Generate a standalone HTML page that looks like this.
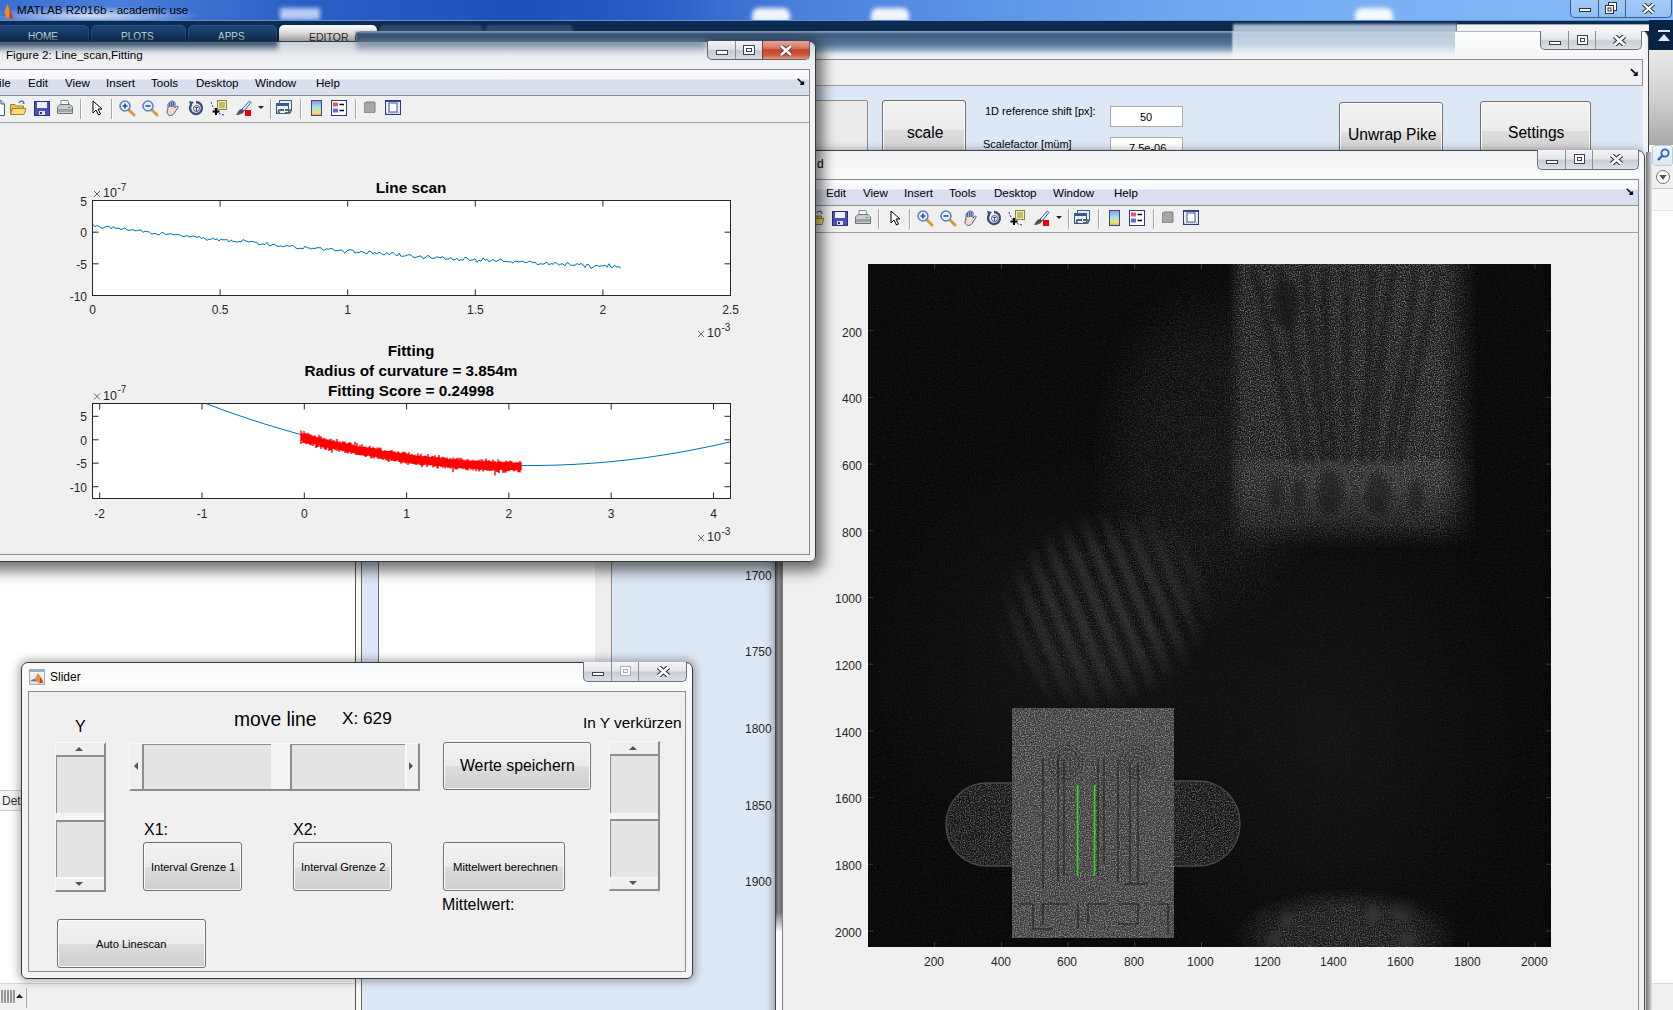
<!DOCTYPE html>
<html><head><meta charset="utf-8">
<style>
*{box-sizing:border-box;margin:0;padding:0}
html,body{width:1673px;height:1010px;overflow:hidden;background:#f0f0f0;font-family:"Liberation Sans",sans-serif;color:#000}
.a{position:absolute}
.t{position:absolute;white-space:nowrap;line-height:1}
/* window frame */
.win{position:absolute;border:1px solid #3c3c3c;border-radius:7px 7px 0 0;background:linear-gradient(#e9eef3,#f6f8fa 40px,#eef2f6);box-shadow:0 0 12px 3px rgba(0,0,0,.45)}
.wbtns{position:absolute;top:-1px;height:19px;border:1px solid #6a6f78;border-top:none;border-radius:0 0 5px 5px;overflow:hidden;display:flex;background:linear-gradient(#f4f5f7,#e3e6ea 45%,#c9ced6 55%,#dde1e6)}
.wbtns div{position:relative;border-left:1px solid #8a8f98;height:100%}
.wbtns div:first-child{border-left:none}
.menubar{position:absolute;border:1px solid #8d8d8d;background:linear-gradient(#fbfbfd 0,#f7f8fb 9px,#d8deee 10px,#dbe0ef 100%)}
.mi{position:absolute;font-size:11.6px;top:8px;line-height:1;white-space:nowrap}
.toolbar{position:absolute;background:#f0f0f0;border-bottom:1px solid #a0a0a0}
.sep{position:absolute;top:5px;width:2px;height:18px;border-left:1px solid #a8a8a8;border-right:1px solid #fff}
.btn{position:absolute;border:1px solid #707070;border-radius:3px;background:linear-gradient(#f2f2f2 0,#ebebeb 50%,#dddddd 50%,#cfcfcf 100%);box-shadow:inset 0 0 0 1px #fcfcfc;text-align:center;white-space:nowrap}
.tick{font-size:12px;color:#262626}
</style></head><body>
<!-- MATLAB main title bar -->
<div class="a" style="left:0;top:0;width:1673px;height:20px;background:linear-gradient(90deg,#3a6fd2 0,#4a7ed8 120px,#2b5fc6 300px,#1f4fb8 520px,#2a5cc4 650px,#4a80dc 800px,#5e96e8 1000px,#74acf2 1250px,#80b6f6 1500px,#86baf7 1673px)"></div>
<div class="a" style="left:0;top:0;width:420px;height:20px;background:radial-gradient(ellipse 110px 10px at 90px 16px,rgba(255,255,255,.75),rgba(255,255,255,0))"></div>
<div class="a" style="left:752px;top:8px;width:38px;height:14px;border-radius:7px 7px 0 0;background:rgba(255,255,255,.92);filter:blur(2px)"></div>
<div class="a" style="left:871px;top:8px;width:38px;height:14px;border-radius:7px 7px 0 0;background:rgba(255,255,255,.92);filter:blur(2px)"></div>
<div class="a" style="left:1355px;top:8px;width:38px;height:14px;border-radius:7px 7px 0 0;background:rgba(255,255,255,.92);filter:blur(2px)"></div>
<div class="a" style="left:280px;top:8px;width:40px;height:12px;background:rgba(220,230,255,.8);filter:blur(2px)"></div>
<svg class="a" style="left:-1px;top:2px" width="15" height="18" viewBox="1 1 14 12" preserveAspectRatio="none"><path d="M1 10 L6 7.5 L7.5 10.5 Z" fill="#3a78c0"/><path d="M6 7.5 L9 2 L11 6.5 L10.5 12.5 L7.5 10.5Z" fill="#f08a24"/><path d="M9 2 L12 7 L14.5 11.5 L10.5 12.5 L11 6.5Z" fill="#c8401c"/></svg>
<div class="t" style="left:17px;top:4px;font-size:11.6px;color:#000">MATLAB R2016b - academic use</div>
<!-- main window buttons -->
<div class="a" style="left:1570px;top:0;width:102px;height:18px;border:1px solid #3a5a8a;border-top:none;border-radius:0 0 5px 5px;background:linear-gradient(rgba(255,255,255,.25),rgba(255,255,255,.1))"></div>
<div class="a" style="left:1598px;top:0;width:1px;height:17px;background:#3a5a8a"></div>
<div class="a" style="left:1625px;top:0;width:1px;height:17px;background:#3a5a8a"></div>
<div class="a" style="left:1579px;top:8px;width:12px;height:4px;border:1px solid #333;background:#fff"></div>
<svg class="a" style="left:1604px;top:2px" width="14" height="13"><rect x="4.5" y="0.5" width="8" height="8" fill="#fff" stroke="#333"/><rect x="1.5" y="3.5" width="8" height="8" fill="#fff" stroke="#333"/><rect x="4" y="6" width="3" height="3" fill="none" stroke="#333"/></svg>
<svg class="a" style="left:1642px;top:3px" width="13" height="11"><path d="M1.5 1 L11.5 10 M11.5 1 L1.5 10" stroke="#333" stroke-width="4.2"/><path d="M1.5 1 L11.5 10 M11.5 1 L1.5 10" stroke="#fff" stroke-width="2.2"/></svg>
<!-- tab strip -->
<div class="a" style="left:0;top:20px;width:1673px;height:25px;background:linear-gradient(#0c2c52,#082445)"></div>
<div class="a" style="left:0;top:20px;width:1673px;height:1px;background:#5f8fd0"></div>
<div class="a" style="left:-4px;top:25px;width:93px;height:20px;border-radius:5px 5px 0 0;background:linear-gradient(#1c4677,#12365f);border:1px solid #2a5487"></div>
<div class="a" style="left:91px;top:25px;width:95px;height:20px;border-radius:5px 5px 0 0;background:linear-gradient(#1c4677,#12365f);border:1px solid #2a5487"></div>
<div class="a" style="left:188px;top:25px;width:89px;height:20px;border-radius:5px 5px 0 0;background:linear-gradient(#1c4677,#12365f);border:1px solid #2a5487"></div>
<div class="a" style="left:279px;top:25px;width:98px;height:20px;border-radius:5px 5px 0 0;background:linear-gradient(#fafafa,#d6d6d6)"></div>
<div class="a" style="left:379px;top:25px;width:104px;height:20px;border-radius:5px 5px 0 0;background:#2e4c6e;filter:blur(1px)"></div>
<div class="a" style="left:485px;top:25px;width:88px;height:20px;border-radius:5px 5px 0 0;background:#2e4c6e;filter:blur(1px)"></div>
<div class="t" style="left:28px;top:32px;font-size:10px;color:#dfe8f2">HOME</div>
<div class="t" style="left:121px;top:32px;font-size:10px;color:#dfe8f2">PLOTS</div>
<div class="t" style="left:218px;top:32px;font-size:10px;color:#dfe8f2">APPS</div>
<div class="t" style="left:309px;top:32px;font-size:10.5px;color:#333">EDITOR</div>
<!-- GUI window (behind) -->
<div class="a" style="left:355px;top:31px;width:1294px;height:990px;border:1px solid #444;border-top-color:#a8b8c8;border-radius:7px 7px 0 0;background:linear-gradient(#e6ebf1,#f4f6f9 30px,#eef1f5)"></div>
<div class="a" style="left:356px;top:32px;width:877px;height:26px;background:linear-gradient(#3a5a80 0,#4a6a90 8px,#5a7aa0 13px,#a4b8ce 19px,#e6ebf0 22px,#f4f6f8 26px);filter:blur(1px)"></div>
<div class="a" style="left:1233px;top:24px;width:224px;height:8px;background:linear-gradient(#9ab0c8,#b8c8da);filter:blur(.8px)"></div>
<div class="a" style="left:1233px;top:32px;width:224px;height:26px;background:linear-gradient(#b6c8dc 0,#c6d4e4 12px,#dde5ee 18px,#f4f6f8 24px);filter:blur(1px)"></div>
<div class="a" style="left:1455px;top:32px;width:190px;height:26px;background:linear-gradient(#fdfdfd,#f4f6f8)"></div>
<div class="a" style="left:1457px;top:24px;width:192px;height:7px;background:#f4f4f4;border-top:1px solid #9aa"></div>
<div class="wbtns" style="left:1540px;top:31px;width:102px;height:19px">
 <div style="width:28px"><div class="a" style="left:8px;top:10px;width:12px;height:4px;border:1px solid #3c4150;background:#fff"></div></div>
 <div style="width:27px"><div class="a" style="left:8px;top:4px;width:11px;height:10px;border:1px solid #3c4150;background:#fff"><div class="a" style="left:2px;top:2px;width:5px;height:4px;border:1px solid #3c4150"></div></div></div>
 <div style="width:47px"><svg class="a" style="left:17px;top:4px" width="13" height="11"><path d="M1.5 1 L11.5 10 M11.5 1 L1.5 10" stroke="#3c4150" stroke-width="5"/><path d="M1.5 1 L11.5 10 M11.5 1 L1.5 10" stroke="#fff" stroke-width="2.6"/></svg></div>
</div>
<div class="a" style="left:363px;top:59px;width:1280px;height:27px;background:#f0f0f0;border:1px solid #8d8d8d;border-bottom:1px solid #a0a0a0"></div>
<div class="t" style="left:1629px;top:66px;font-size:12px;font-weight:bold">&#x2198;</div>
<div class="a" style="left:362px;top:86px;width:1281px;height:930px;background:#dde8f6"></div>
<!-- partially hidden button -->
<div class="a" style="left:780px;top:100px;width:88px;height:60px;background:#ebebeb;border:1px solid #8e8e8e;border-radius:2px"></div>
<div class="btn" style="left:882px;top:100px;width:84px;height:60px"><span class="t" style="left:24px;top:24px;font-size:15.6px">scale</span></div>
<div class="t" style="left:985px;top:106px;font-size:11px">1D reference shift [px]:</div>
<div class="a" style="left:1110px;top:106px;width:73px;height:21px;background:#fff;border:1px solid #a9a9a9"><span class="t" style="left:29px;top:5px;font-size:11px">50</span></div>
<div class="t" style="left:983px;top:139px;font-size:11px">Scalefactor [müm]</div>
<div class="a" style="left:1110px;top:137px;width:73px;height:21px;background:#fff;border:1px solid #a9a9a9"><span class="t" style="left:18px;top:5px;font-size:11px">7.5e-06</span></div>
<div class="btn" style="left:1339px;top:102px;width:104px;height:60px"><span class="t" style="left:8px;top:24px;font-size:15.6px">Unwrap Pike</span></div>
<div class="btn" style="left:1480px;top:101px;width:111px;height:60px"><span class="t" style="left:27px;top:23px;font-size:15.6px">Settings</span></div>
<!-- lower part of GUI: white panel, gray strip -->
<div class="a" style="left:362px;top:86px;width:16px;height:930px;background:#dde8f6"></div>
<div class="a" style="left:361px;top:540px;width:1px;height:480px;background:#6a6a6a"></div>
<div class="a" style="left:378px;top:540px;width:1px;height:300px;background:#6a6a6a"></div>
<div class="a" style="left:379px;top:540px;width:216px;height:300px;background:#fff"></div>
<div class="a" style="left:595px;top:540px;width:16px;height:300px;background:#eeeeee"></div>
<div class="a" style="left:611px;top:540px;width:1px;height:300px;background:#8a8f96"></div>
<div class="a" style="left:355px;top:540px;width:1px;height:480px;background:#555"></div>
<div class="a" style="left:356px;top:540px;width:5px;height:480px;background:#fafafa"></div>
<div class="t" style="left:745px;top:570px;font-size:12px;color:#262626">1700</div>
<div class="t" style="left:745px;top:646px;font-size:12px;color:#262626">1750</div>
<div class="t" style="left:745px;top:723px;font-size:12px;color:#262626">1800</div>
<div class="t" style="left:745px;top:800px;font-size:12px;color:#262626">1850</div>
<div class="t" style="left:745px;top:876px;font-size:12px;color:#262626">1900</div>
<!-- right strip -->
<div class="a" style="left:1649px;top:20px;width:24px;height:990px;background:#fff"></div>
<div class="a" style="left:1649px;top:45px;width:24px;height:5px;background:#082445"></div>
<div class="a" style="left:1649px;top:20px;width:24px;height:30px;background:#082445"></div>
<div class="a" style="left:1658px;top:30px;width:12px;height:2px;background:#dfe8f2"></div>
<svg class="a" style="left:1658px;top:34px" width="12" height="7"><path d="M0 7 L6 0 L12 7Z" fill="#dfe8f2"/></svg>
<div class="a" style="left:1649px;top:50px;width:24px;height:95px;background:linear-gradient(#eaeaea,#d0d0d0 50%,#a9a9a9)"></div>
<div class="a" style="left:1652px;top:145px;width:21px;height:21px;background:linear-gradient(#f3f6fa,#dde6f0);border:1px solid #c3ccd8;border-radius:3px"></div>
<svg class="a" style="left:1656px;top:148px" width="14" height="14"><circle cx="9" cy="5" r="3.6" fill="none" stroke="#2a64c0" stroke-width="1.8"/><path d="M6.5 7.5 L2 12" stroke="#2a64c0" stroke-width="2.4"/></svg>
<div class="a" style="left:1649px;top:166px;width:24px;height:22px;background:#f0f0f0"></div>
<svg class="a" style="left:1655px;top:169px" width="16" height="16"><circle cx="8" cy="8" r="6.5" fill="#fff" stroke="#777"/><path d="M4.5 6 L11.5 6 L8 11Z" fill="#555"/></svg>
<div class="a" style="left:1649px;top:188px;width:24px;height:1px;background:#ccc"></div>
<div class="a" style="left:1649px;top:189px;width:24px;height:22px;background:#f7f7f7;border-bottom:1px solid #e5e5e5"></div>
<div class="a" style="left:1649px;top:983px;width:24px;height:27px;background:#f0f0f0;border-top:1px solid #ddd"></div>
<!-- bottom-left desktop panel -->
<div class="a" style="left:0;top:45px;width:355px;height:965px;background:#fff"></div>
<div class="a" style="left:0;top:790px;width:22px;height:21px;background:#f4f4f4;border-top:1px solid #ccc;border-bottom:1px solid #ccc"></div>
<div class="t" style="left:2px;top:795px;font-size:12px;color:#333">Det</div>
<div class="a" style="left:0;top:983px;width:355px;height:27px;background:#f0f0f0;border-top:1px solid #d6d6d6"></div>
<div class="a" style="left:1px;top:990px;width:14px;height:13px;background:repeating-linear-gradient(90deg,#999 0,#999 2px,#e8e8e8 2px,#e8e8e8 3px)"></div>
<svg class="a" style="left:16px;top:994px" width="7" height="4"><path d="M0 4 L3.5 0 L7 4Z" fill="#222"/></svg>
<div class="a" style="left:26px;top:988px;width:1px;height:20px;background:#aaa"></div>
<!-- Image figure window -->
<div class="a" style="left:775px;top:150px;width:870px;height:880px;border:1px solid #444;border-radius:7px 7px 0 0;background:linear-gradient(#f2f4f7,#fbfbfc 25px,#f1f3f6 30px);box-shadow:-2px 0 8px rgba(0,0,0,.35)"></div>
<div class="t" style="left:817px;top:158px;font-size:12px">d</div>
<div class="wbtns" style="left:1537px;top:150px;width:102px;height:20px">
 <div style="width:28px"><div class="a" style="left:8px;top:10px;width:12px;height:4px;border:1px solid #3c4150;background:#fff"></div></div>
 <div style="width:27px"><div class="a" style="left:8px;top:4px;width:11px;height:10px;border:1px solid #3c4150;background:#fff"><div class="a" style="left:2px;top:2px;width:5px;height:4px;border:1px solid #3c4150"></div></div></div>
 <div style="width:47px"><svg class="a" style="left:17px;top:4px" width="13" height="11"><path d="M1.5 1 L11.5 10 M11.5 1 L1.5 10" stroke="#3c4150" stroke-width="5"/><path d="M1.5 1 L11.5 10 M11.5 1 L1.5 10" stroke="#fff" stroke-width="2.6"/></svg></div>
</div>
<div class="menubar" style="left:783px;top:179px;width:856px;height:27px"></div>
<div class="t" style="left:1625px;top:186px;font-size:11px;font-weight:bold">&#x2198;</div>
<div class="mi" style="left:826px;top:187px">Edit</div>
<div class="mi" style="left:863px;top:187px">View</div>
<div class="mi" style="left:904px;top:187px">Insert</div>
<div class="mi" style="left:949px;top:187px">Tools</div>
<div class="mi" style="left:994px;top:187px">Desktop</div>
<div class="mi" style="left:1053px;top:187px">Window</div>
<div class="mi" style="left:1114px;top:187px">Help</div>
<div class="a" style="left:783px;top:206px;width:856px;height:27px;background:#f0f0f0;border-bottom:1px solid #a0a0a0;border-right:1px solid #8d8d8d;border-left:1px solid #8d8d8d"></div>
<div id="tb2" class="a" style="left:798px;top:206px;width:420px;height:27px"><svg class="a" style="left:0;top:0;overflow:visible" width="420" height="27"><g transform="translate(-10,4)"><path d="M2.5 0.5 H11 L14.5 4 V15.5 H2.5Z" fill="#fff" stroke="#3d5a8a"/><path d="M11 0.5 V4 H14.5" fill="#dde6f5" stroke="#3d5a8a"/></g><g transform="translate(10,4)"><path d="M0.5 4.5 H5 L6.5 6 H13.5 V14.5 H0.5Z" fill="#e8c35a" stroke="#a4802a"/><path d="M2.5 8.5 H16 L14 14.5 H0.5Z" fill="#f7dd7e" stroke="#a4802a"/><path d="M9 3 C10 0.5 13 0.5 14 3" fill="none" stroke="#3d6db3" stroke-width="1.3"/><path d="M13 1.5 L15 3.5 L12.5 4Z" fill="#3d6db3"/></g><g transform="translate(34,4)"><rect x="0.5" y="1.5" width="15" height="14" fill="#4a50b8" stroke="#2c2f7a"/><rect x="3" y="2" width="10" height="6" fill="#eef0ff"/><rect x="5" y="11" width="6" height="4" fill="#dfe2f0"/><rect x="6" y="12" width="2" height="2" fill="#333"/></g><g transform="translate(57,4)"><path d="M4 0.5 H11 L12 5 H4Z" fill="#fff" stroke="#7a8a9a"/><path d="M0.5 7 L3 4.5 H13 L15.5 7 V13.5 H0.5Z" fill="#c9cdd2" stroke="#6d7378"/><rect x="1" y="9" width="14" height="3" fill="#9da3a8"/><rect x="11" y="7" width="2" height="1" fill="#3a3"/></g><rect x="80" y="3" width="1" height="20" fill="#a7a7a7"/><rect x="81" y="3" width="1" height="20" fill="#fff"/><rect x="111" y="3" width="1" height="20" fill="#a7a7a7"/><rect x="112" y="3" width="1" height="20" fill="#fff"/><rect x="270" y="3" width="1" height="20" fill="#a7a7a7"/><rect x="271" y="3" width="1" height="20" fill="#fff"/><rect x="300" y="3" width="1" height="20" fill="#a7a7a7"/><rect x="301" y="3" width="1" height="20" fill="#fff"/><rect x="355" y="3" width="1" height="20" fill="#a7a7a7"/><rect x="356" y="3" width="1" height="20" fill="#fff"/><g transform="translate(92,4)"><path d="M1 1 V13 L4 10 L6.5 15 L8.5 14 L6 9 H10Z" fill="#fff" stroke="#000" stroke-width="1"/></g><g transform="translate(119,4)"><path d="M9.5 9.5 L15 15" stroke="#d89a3c" stroke-width="3" stroke-linecap="round"/><circle cx="6" cy="6" r="5" fill="#e6f0fb" stroke="#5b7fc0" stroke-width="1.5"/><path d="M3.5 6 H8.5 M6 3.5 V8.5" stroke="#2a4fa0" stroke-width="1.6"/></g><g transform="translate(142,4)"><path d="M9.5 9.5 L15 15" stroke="#d89a3c" stroke-width="3" stroke-linecap="round"/><circle cx="6" cy="6" r="5" fill="#e6f0fb" stroke="#5b7fc0" stroke-width="1.5"/><path d="M3.5 6 H8.5" stroke="#2a4fa0" stroke-width="1.6"/></g><g transform="translate(165,4)"><path d="M3 8 V4 C3 3 4.5 3 4.5 4 V7 V2.5 C4.5 1.5 6.3 1.5 6.3 2.5 V7 V1.5 C6.3 0.5 8.2 0.5 8.2 1.5 V7 V2.5 C8.2 1.5 10 1.5 10 2.5 V8 L11.5 6.5 C12.5 5.5 14 6.5 13 7.5 L10 12 C9 14 7.5 15.5 5.5 15.5 C3.5 15.5 2 14 2 12Z" fill="#f6d9bf" stroke="#3d5fb0" stroke-width="1"/></g><g transform="translate(188,4)"><path d="M3.5 4 A6 6 0 1 0 8 2" fill="none" stroke="#3b4f7a" stroke-width="2.4"/><path d="M1 1 L6 2 L2.5 6Z" fill="#3b4f7a"/><circle cx="8.5" cy="8.5" r="3" fill="none" stroke="#3b4f7a" stroke-width="1"/><path d="M7 7.5 H10 M8.5 7.5 V11" stroke="#3b4f7a"/></g><g transform="translate(211,4)"><rect x="6.5" y="0.5" width="9" height="9" fill="#f2eca0" stroke="#8c8840"/><path d="M8 3 H14 M8 5 H14 M8 7 H14" stroke="#8c8840"/><path d="M0 2 C1 6 3 10 9 14 L13 15" fill="none" stroke="#3030e0" stroke-dasharray="2 1.5"/><path d="M5 8 V15 M1.5 11.5 H8.5" stroke="#000" stroke-width="2"/></g><g transform="translate(235,4)"><path d="M14.5 1 L7 9 L9 11 L16 2.5Z" fill="#dfe8f8" stroke="#3a5fbf"/><path d="M7 9 C4 9 3 12 1 15 C5 15 9 13 9 11Z" fill="#555"/><rect x="10" y="10" width="6" height="6" fill="#e00"/></g><g transform="translate(258,4)"><path d="M0 6 H6 L3 9Z" fill="#222"/></g><g transform="translate(276,4)"><rect x="3.5" y="0.5" width="12" height="10" fill="#e8eef8" stroke="#3a5a8a"/><rect x="0.5" y="3.5" width="12" height="10" fill="#e8eef8" stroke="#3a5a8a"/><rect x="1" y="4" width="11" height="2" fill="#3a5a8a"/><path d="M4 13 C2 13 2 10 4 10 H8 M9 10 H13 C15 10 15 13 13 13 H9" fill="none" stroke="#566" stroke-width="1.8"/></g><g transform="translate(311,4)"><defs><linearGradient id="cbg2" x1="0" y1="0" x2="0" y2="1"><stop offset="0" stop-color="#9a8ee8"/><stop offset=".45" stop-color="#9ce8e8"/><stop offset=".8" stop-color="#f2e070"/><stop offset="1" stop-color="#f49a60"/></linearGradient></defs><rect x="0.5" y="0.5" width="10" height="15" fill="url(#cbg2)" stroke="#3a4a8a"/></g><g transform="translate(331,4)"><rect x="0.5" y="0.5" width="15" height="15" fill="#fff" stroke="#2c3e7a"/><rect x="2" y="2.5" width="5" height="4" fill="#e85858"/><rect x="2" y="8.5" width="5" height="4" fill="#6464e8"/><path d="M8.5 4.5 H13 M8.5 10.5 H13" stroke="#000" stroke-width="1.3"/></g><g transform="translate(364,4)"><rect x="0.5" y="2.5" width="10" height="10" fill="#a6a6a6" stroke="#909090"/><path d="M1 2.5 L2 1.5 H10.5 L11.5 2.5 V12" fill="none" stroke="#b8b8b8"/></g><g transform="translate(385,4)"><rect x="0.5" y="0.5" width="15" height="14" fill="#3d5296" stroke="#2c3e7a"/><rect x="1" y="2" width="14" height="12" fill="#e8ecf4"/><rect x="4" y="3" width="8" height="9" fill="#fff" stroke="#3d5296"/><path d="M1 13 H15" stroke="#8a98c0" stroke-dasharray="1 1"/></g></svg></div>
<div class="a" style="left:782px;top:233px;width:857px;height:800px;background:#f0f0f0;border-left:1px solid #7d7d7d;border-right:1px solid #8d8d8d"></div>
<div class="a" style="left:776px;top:561px;width:6px;height:370px;background:linear-gradient(90deg,#5a5a5a,#8a8a8a 40%,#6a6a6a);-webkit-mask-image:linear-gradient(#000 95%,transparent)"></div>
<div class="a" style="left:776px;top:931px;width:6px;height:80px;background:#fcfcfc"></div>
<div class="a" style="left:1646px;top:152px;width:6px;height:858px;background:linear-gradient(90deg,#707070,#a8a8a8 50%,#e4e4e4)"></div>
<!-- image -->
<svg class="a" style="left:868px;top:264px" width="683" height="683" viewBox="0 0 683 683"><defs><filter id="spk" x="0" y="0" width="683" height="683" filterUnits="userSpaceOnUse"><feTurbulence type="fractalNoise" baseFrequency="0.8" numOctaves="2" seed="11"/><feColorMatrix type="matrix" values="0 0 0 0 1  0 0 0 0 1  0 0 0 0 1  2.6 0 0 0 -1.05"/></filter><filter id="b2" x="-30%" y="-30%" width="160%" height="160%"><feGaussianBlur stdDeviation="2"/></filter><filter id="b1" x="-30%" y="-30%" width="160%" height="160%"><feGaussianBlur stdDeviation="1"/></filter><radialGradient id="rg"><stop offset="0" stop-color="#fff" stop-opacity="1"/><stop offset=".6" stop-color="#fff" stop-opacity=".85"/><stop offset="1" stop-color="#fff" stop-opacity="0"/></radialGradient><radialGradient id="r12"><stop offset="0" stop-color="#131313"/><stop offset="1" stop-color="#131313" stop-opacity="0"/></radialGradient><linearGradient id="gBH" x1="0" y1="0" x2="1" y2="0"><stop offset="0" stop-color="#fff" stop-opacity="0"/><stop offset="0.06" stop-color="#fff" stop-opacity="0.85"/><stop offset="0.85" stop-color="#fff" stop-opacity="1"/><stop offset="1" stop-color="#fff" stop-opacity="0"/></linearGradient><linearGradient id="gBV" x1="0" y1="0" x2="0" y2="1"><stop offset="0" stop-color="#fff" stop-opacity="1"/><stop offset="0.78" stop-color="#fff" stop-opacity="1"/><stop offset="0.93" stop-color="#fff" stop-opacity="0.5"/><stop offset="1" stop-color="#fff" stop-opacity="0"/></linearGradient><mask id="mBH" maskUnits="userSpaceOnUse" x="0" y="0" width="683" height="683"><rect x="360" y="0" width="250" height="300" fill="url(#gBH)"/></mask><mask id="mBV" maskUnits="userSpaceOnUse" x="0" y="0" width="683" height="683"><rect x="300" y="-5" width="383" height="290" fill="url(#gBV)"/></mask><mask id="mChip" maskUnits="userSpaceOnUse" x="0" y="0" width="683" height="683"><rect x="144" y="444" width="162" height="230" fill="#fff"/></mask><mask id="mEll" maskUnits="userSpaceOnUse" x="0" y="0" width="683" height="683"><rect x="78" y="519" width="110" height="83" rx="41" fill="#fff"/><rect x="262" y="517" width="110" height="85" rx="42" fill="#fff"/></mask><mask id="mDiag" maskUnits="userSpaceOnUse" x="0" y="0" width="683" height="683"><ellipse cx="238" cy="345" rx="115" ry="100" fill="url(#rg)" transform="rotate(-25 238 345)"/></mask><mask id="mHalo" maskUnits="userSpaceOnUse" x="0" y="0" width="683" height="683"><ellipse cx="340" cy="190" rx="120" ry="180" fill="url(#rg)"/></mask><mask id="mBot" maskUnits="userSpaceOnUse" x="0" y="0" width="683" height="683"><ellipse cx="478" cy="672" rx="115" ry="48" fill="url(#rg)"/></mask></defs><rect width="683" height="683" fill="#070707"/><ellipse cx="210" cy="400" rx="220" ry="220" fill="url(#r12)"/><ellipse cx="460" cy="470" rx="200" ry="260" fill="url(#r12)"/><rect width="683" height="683" filter="url(#spk)" opacity=".055"/><g mask="url(#mHalo)"><rect x="200" y="0" width="300" height="400" fill="#101010"/><rect width="683" height="683" filter="url(#spk)" opacity=".16"/></g><g mask="url(#mBV)"><g mask="url(#mBH)"><rect x="340" y="0" width="320" height="290" fill="#1c1c1c"/><rect width="683" height="683" filter="url(#spk)" opacity=".4"/><g filter="url(#b2)" fill="none" stroke="#0c0c0c" stroke-width="6" opacity=".45"><path d="M385.5 5 Q411.2 100 428.0 200 M410.6 5 Q429.8 100 441.8 200 M436.9 5 Q447.2 100 456.3 200 M457.0 5 Q455.3 100 467.4 200 M478.6 5 Q478.9 100 479.2 200 M504.1 5 Q503.5 100 493.2 200 M525.3 5 Q508.2 100 504.9 200 M547.7 5 Q539.0 100 517.3 200 M570.3 5 Q549.2 100 529.7 200"/></g><g filter="url(#b2)" fill="#121212" opacity=".6"><ellipse cx="418" cy="40" rx="13" ry="24"/><ellipse cx="462" cy="228" rx="12" ry="22"/><ellipse cx="510" cy="230" rx="12" ry="20"/><ellipse cx="408" cy="230" rx="6" ry="16"/><ellipse cx="430" cy="230" rx="5" ry="15"/><ellipse cx="548" cy="232" rx="7" ry="15"/></g><rect x="360" y="195" width="260" height="68" fill="#fff" opacity=".05"/><g filter="url(#b1)" fill="none" stroke="#4a4a4a" stroke-width="2"><ellipse cx="462" cy="228" rx="19" ry="29"/><ellipse cx="512" cy="230" rx="19" ry="27"/></g></g></g><g mask="url(#mDiag)"><g filter="url(#b2)"><path d="M-188.0 240 L-91.0 470" stroke="#262626" stroke-width="10"/><path d="M-166.0 240 L-69.0 470" stroke="#262626" stroke-width="10"/><path d="M-144.0 240 L-47.0 470" stroke="#262626" stroke-width="10"/><path d="M-122.0 240 L-25.0 470" stroke="#262626" stroke-width="10"/><path d="M-100.0 240 L-3.0 470" stroke="#262626" stroke-width="10"/><path d="M-78.0 240 L19.0 470" stroke="#262626" stroke-width="10"/><path d="M-56.0 240 L41.0 470" stroke="#262626" stroke-width="10"/><path d="M-34.0 240 L63.0 470" stroke="#262626" stroke-width="10"/><path d="M-12.0 240 L85.0 470" stroke="#262626" stroke-width="10"/><path d="M10.0 240 L107.0 470" stroke="#262626" stroke-width="10"/><path d="M32.0 240 L129.0 470" stroke="#262626" stroke-width="10"/><path d="M54.0 240 L151.0 470" stroke="#262626" stroke-width="10"/><path d="M76.0 240 L173.0 470" stroke="#262626" stroke-width="10"/><path d="M98.0 240 L195.0 470" stroke="#262626" stroke-width="10"/><path d="M120.0 240 L217.0 470" stroke="#262626" stroke-width="10"/><path d="M142.0 240 L239.0 470" stroke="#262626" stroke-width="10"/><path d="M164.0 240 L261.0 470" stroke="#262626" stroke-width="10"/><path d="M186.0 240 L283.0 470" stroke="#262626" stroke-width="10"/><path d="M208.0 240 L305.0 470" stroke="#262626" stroke-width="10"/><path d="M230.0 240 L327.0 470" stroke="#262626" stroke-width="10"/><path d="M252.0 240 L349.0 470" stroke="#262626" stroke-width="10"/><path d="M274.0 240 L371.0 470" stroke="#262626" stroke-width="10"/><path d="M296.0 240 L393.0 470" stroke="#262626" stroke-width="10"/><path d="M318.0 240 L415.0 470" stroke="#262626" stroke-width="10"/><path d="M340.0 240 L437.0 470" stroke="#262626" stroke-width="10"/><path d="M362.0 240 L459.0 470" stroke="#262626" stroke-width="10"/><path d="M384.0 240 L481.0 470" stroke="#262626" stroke-width="10"/><path d="M406.0 240 L503.0 470" stroke="#262626" stroke-width="10"/><path d="M428.0 240 L525.0 470" stroke="#262626" stroke-width="10"/><path d="M450.0 240 L547.0 470" stroke="#262626" stroke-width="10"/></g><rect width="683" height="683" filter="url(#spk)" opacity=".12"/></g><g mask="url(#mBot)"><rect x="340" y="600" width="280" height="83" fill="#1a1a1a"/><rect width="683" height="683" filter="url(#spk)" opacity=".3"/><g filter="url(#b2)" fill="#3a3a3a"><ellipse cx="393" cy="648" rx="7" ry="9"/><ellipse cx="418" cy="655" rx="6" ry="8"/><ellipse cx="535" cy="645" rx="12" ry="12"/><ellipse cx="505" cy="650" rx="6" ry="10"/><ellipse cx="405" cy="675" rx="8" ry="6"/><ellipse cx="540" cy="676" rx="8" ry="6"/></g></g><g mask="url(#mEll)"><rect x="60" y="500" width="330" height="120" fill="#141414"/><rect width="683" height="683" filter="url(#spk)" opacity=".33"/></g><rect x="78" y="519" width="110" height="83" rx="41" fill="none" stroke="#4a4a4a" stroke-width="1.3"/><rect x="262" y="517" width="110" height="85" rx="42" fill="none" stroke="#4a4a4a" stroke-width="1.3"/><g mask="url(#mChip)"><rect x="144" y="444" width="162" height="230" fill="#3c3c3c"/><rect width="683" height="683" filter="url(#spk)" opacity=".42"/></g><g fill="none" stroke="#1c1c1c" stroke-width="1"><circle cx="198" cy="498" r="5" opacity=".5"/><circle cx="198" cy="498" r="9" opacity=".5"/><circle cx="198" cy="498" r="13" opacity=".5"/><circle cx="198" cy="498" r="17" opacity=".5"/><circle cx="269" cy="498" r="5" opacity=".5"/><circle cx="269" cy="498" r="9" opacity=".5"/><circle cx="269" cy="498" r="13" opacity=".5"/><circle cx="269" cy="498" r="17" opacity=".5"/><path d="M175 495 V624 M190 490 V618 M196 495 V612 M230 495 V612 M236 495 V600 M250 495 V618 M262 498 V620 M256 620 H280 M270 498 V620"/><path d="M150 640 H165 V665 H185 M175 660 V640 H200 M210 640 V665 M220 660 V640 H240 M250 640 H270 V660 H250 M290 640 H300 V670"/></g><path d="M209.6 521 V612 M226.5 521 V612" stroke="#22dd22" stroke-width="1.6"/><g stroke="#3a3a3a" stroke-width="1"><path d="M66.7 683 V678 M66.7 0 V5 M0 66.7 H5 M683 66.7 H678"/><path d="M133.4 683 V678 M133.4 0 V5 M0 133.4 H5 M683 133.4 H678"/><path d="M200.1 683 V678 M200.1 0 V5 M0 200.1 H5 M683 200.1 H678"/><path d="M266.8 683 V678 M266.8 0 V5 M0 266.8 H5 M683 266.8 H678"/><path d="M333.5 683 V678 M333.5 0 V5 M0 333.5 H5 M683 333.5 H678"/><path d="M400.2 683 V678 M400.2 0 V5 M0 400.2 H5 M683 400.2 H678"/><path d="M466.9 683 V678 M466.9 0 V5 M0 466.9 H5 M683 466.9 H678"/><path d="M533.6 683 V678 M533.6 0 V5 M0 533.6 H5 M683 533.6 H678"/><path d="M600.3 683 V678 M600.3 0 V5 M0 600.3 H5 M683 600.3 H678"/><path d="M667.0 683 V678 M667.0 0 V5 M0 667.0 H5 M683 667.0 H678"/></g></svg>
<div class="t tick" style="left:842px;top:327px">200</div>
<div class="t tick" style="left:842px;top:393px">400</div>
<div class="t tick" style="left:842px;top:460px">600</div>
<div class="t tick" style="left:842px;top:527px">800</div>
<div class="t tick" style="left:835px;top:593px">1000</div>
<div class="t tick" style="left:835px;top:660px">1200</div>
<div class="t tick" style="left:835px;top:727px">1400</div>
<div class="t tick" style="left:835px;top:793px">1600</div>
<div class="t tick" style="left:835px;top:860px">1800</div>
<div class="t tick" style="left:835px;top:927px">2000</div>
<div class="t tick" style="left:924px;top:956px">200</div>
<div class="t tick" style="left:991px;top:956px">400</div>
<div class="t tick" style="left:1057px;top:956px">600</div>
<div class="t tick" style="left:1124px;top:956px">800</div>
<div class="t tick" style="left:1187px;top:956px">1000</div>
<div class="t tick" style="left:1254px;top:956px">1200</div>
<div class="t tick" style="left:1320px;top:956px">1400</div>
<div class="t tick" style="left:1387px;top:956px">1600</div>
<div class="t tick" style="left:1454px;top:956px">1800</div>
<div class="t tick" style="left:1521px;top:956px">2000</div>
<!-- Figure 2 window -->
<div class="a" style="left:-23px;top:41px;width:839px;height:521px;border:1px solid #3a3a3a;border-radius:7px 7px 6px 6px;background:linear-gradient(#d9dfe6,#f4f6f8 26px,#f0f2f5 30px,#eef1f4);box-shadow:2px 4px 14px 5px rgba(0,0,0,.55)"></div>
<div class="a" style="left:-22px;top:42px;width:837px;height:27px;border-radius:0 6px 0 0;background:linear-gradient(#c9d0d8,#e6e9ed 12px,#eef1f4 20px,#f0f2f5)"></div>
<div class="a" style="left:-22px;top:40px;width:300px;height:12px;background:linear-gradient(#0e2a4a,rgba(40,70,100,.5) 60%,rgba(200,210,220,0));filter:blur(2px)"></div>
<div class="a" style="left:356px;top:40px;width:350px;height:13px;background:linear-gradient(#5f7890,rgba(140,158,176,.6) 60%,rgba(200,210,220,0));filter:blur(2.5px)"></div>
<div class="t" style="left:6px;top:49px;font-size:11.6px">Figure 2: Line_scan,Fitting</div>
<div class="a" style="left:707px;top:41px;width:103px;height:19px;border:1px solid #5f6570;border-top:none;border-radius:0 0 5px 5px;overflow:hidden;background:linear-gradient(#eef0f3,#dfe3e8 45%,#c3c9d1 55%,#d9dde3)"></div>
<div class="a" style="left:735px;top:41px;width:1px;height:18px;background:#8a8f98"></div>
<div class="a" style="left:762px;top:41px;width:47px;height:18px;border-radius:0 0 4px 0;border-left:1px solid #7a3a30;background:linear-gradient(#e8a497 0,#d47767 40%,#c7432a 50%,#d45a3f 80%,#e59b80 100%)"></div>
<div class="a" style="left:716px;top:50px;width:12px;height:5px;border:1px solid #3c4150;background:#fff"></div>
<div class="a" style="left:743px;top:45px;width:12px;height:10px;border:1px solid #3c4150;background:#fff"><div class="a" style="left:2px;top:2px;width:6px;height:4px;border:1px solid #3c4150"></div></div>
<svg class="a" style="left:779px;top:45px" width="14" height="11"><path d="M2 1 L12 10 M12 1 L2 10" stroke="#4a4f58" stroke-width="4.4"/><path d="M2 1 L12 10 M12 1 L2 10" stroke="#fff" stroke-width="2.4"/></svg>
<div class="menubar" style="left:-15px;top:69px;width:825px;height:27px"></div>
<div class="t" style="left:796px;top:76px;font-size:11px;font-weight:bold">&#x2198;</div>
<div class="mi" style="left:-8px;top:77px">File</div>
<div class="mi" style="left:28px;top:77px">Edit</div>
<div class="mi" style="left:65px;top:77px">View</div>
<div class="mi" style="left:106px;top:77px">Insert</div>
<div class="mi" style="left:151px;top:77px">Tools</div>
<div class="mi" style="left:196px;top:77px">Desktop</div>
<div class="mi" style="left:255px;top:77px">Window</div>
<div class="mi" style="left:316px;top:77px">Help</div>
<div class="a" style="left:-15px;top:96px;width:825px;height:27px;background:#f0f0f0;border-bottom:1px solid #a0a0a0;border-right:1px solid #8d8d8d"></div>
<div id="tb1" class="a" style="left:0;top:96px;width:420px;height:27px"><svg class="a" style="left:0;top:0;overflow:visible" width="420" height="27"><g transform="translate(-10,4)"><path d="M2.5 0.5 H11 L14.5 4 V15.5 H2.5Z" fill="#fff" stroke="#3d5a8a"/><path d="M11 0.5 V4 H14.5" fill="#dde6f5" stroke="#3d5a8a"/></g><g transform="translate(10,4)"><path d="M0.5 4.5 H5 L6.5 6 H13.5 V14.5 H0.5Z" fill="#e8c35a" stroke="#a4802a"/><path d="M2.5 8.5 H16 L14 14.5 H0.5Z" fill="#f7dd7e" stroke="#a4802a"/><path d="M9 3 C10 0.5 13 0.5 14 3" fill="none" stroke="#3d6db3" stroke-width="1.3"/><path d="M13 1.5 L15 3.5 L12.5 4Z" fill="#3d6db3"/></g><g transform="translate(34,4)"><rect x="0.5" y="1.5" width="15" height="14" fill="#4a50b8" stroke="#2c2f7a"/><rect x="3" y="2" width="10" height="6" fill="#eef0ff"/><rect x="5" y="11" width="6" height="4" fill="#dfe2f0"/><rect x="6" y="12" width="2" height="2" fill="#333"/></g><g transform="translate(57,4)"><path d="M4 0.5 H11 L12 5 H4Z" fill="#fff" stroke="#7a8a9a"/><path d="M0.5 7 L3 4.5 H13 L15.5 7 V13.5 H0.5Z" fill="#c9cdd2" stroke="#6d7378"/><rect x="1" y="9" width="14" height="3" fill="#9da3a8"/><rect x="11" y="7" width="2" height="1" fill="#3a3"/></g><rect x="80" y="3" width="1" height="20" fill="#a7a7a7"/><rect x="81" y="3" width="1" height="20" fill="#fff"/><rect x="111" y="3" width="1" height="20" fill="#a7a7a7"/><rect x="112" y="3" width="1" height="20" fill="#fff"/><rect x="270" y="3" width="1" height="20" fill="#a7a7a7"/><rect x="271" y="3" width="1" height="20" fill="#fff"/><rect x="300" y="3" width="1" height="20" fill="#a7a7a7"/><rect x="301" y="3" width="1" height="20" fill="#fff"/><rect x="355" y="3" width="1" height="20" fill="#a7a7a7"/><rect x="356" y="3" width="1" height="20" fill="#fff"/><g transform="translate(92,4)"><path d="M1 1 V13 L4 10 L6.5 15 L8.5 14 L6 9 H10Z" fill="#fff" stroke="#000" stroke-width="1"/></g><g transform="translate(119,4)"><path d="M9.5 9.5 L15 15" stroke="#d89a3c" stroke-width="3" stroke-linecap="round"/><circle cx="6" cy="6" r="5" fill="#e6f0fb" stroke="#5b7fc0" stroke-width="1.5"/><path d="M3.5 6 H8.5 M6 3.5 V8.5" stroke="#2a4fa0" stroke-width="1.6"/></g><g transform="translate(142,4)"><path d="M9.5 9.5 L15 15" stroke="#d89a3c" stroke-width="3" stroke-linecap="round"/><circle cx="6" cy="6" r="5" fill="#e6f0fb" stroke="#5b7fc0" stroke-width="1.5"/><path d="M3.5 6 H8.5" stroke="#2a4fa0" stroke-width="1.6"/></g><g transform="translate(165,4)"><path d="M3 8 V4 C3 3 4.5 3 4.5 4 V7 V2.5 C4.5 1.5 6.3 1.5 6.3 2.5 V7 V1.5 C6.3 0.5 8.2 0.5 8.2 1.5 V7 V2.5 C8.2 1.5 10 1.5 10 2.5 V8 L11.5 6.5 C12.5 5.5 14 6.5 13 7.5 L10 12 C9 14 7.5 15.5 5.5 15.5 C3.5 15.5 2 14 2 12Z" fill="#f6d9bf" stroke="#3d5fb0" stroke-width="1"/></g><g transform="translate(188,4)"><path d="M3.5 4 A6 6 0 1 0 8 2" fill="none" stroke="#3b4f7a" stroke-width="2.4"/><path d="M1 1 L6 2 L2.5 6Z" fill="#3b4f7a"/><circle cx="8.5" cy="8.5" r="3" fill="none" stroke="#3b4f7a" stroke-width="1"/><path d="M7 7.5 H10 M8.5 7.5 V11" stroke="#3b4f7a"/></g><g transform="translate(211,4)"><rect x="6.5" y="0.5" width="9" height="9" fill="#f2eca0" stroke="#8c8840"/><path d="M8 3 H14 M8 5 H14 M8 7 H14" stroke="#8c8840"/><path d="M0 2 C1 6 3 10 9 14 L13 15" fill="none" stroke="#3030e0" stroke-dasharray="2 1.5"/><path d="M5 8 V15 M1.5 11.5 H8.5" stroke="#000" stroke-width="2"/></g><g transform="translate(235,4)"><path d="M14.5 1 L7 9 L9 11 L16 2.5Z" fill="#dfe8f8" stroke="#3a5fbf"/><path d="M7 9 C4 9 3 12 1 15 C5 15 9 13 9 11Z" fill="#555"/><rect x="10" y="10" width="6" height="6" fill="#e00"/></g><g transform="translate(258,4)"><path d="M0 6 H6 L3 9Z" fill="#222"/></g><g transform="translate(276,4)"><rect x="3.5" y="0.5" width="12" height="10" fill="#e8eef8" stroke="#3a5a8a"/><rect x="0.5" y="3.5" width="12" height="10" fill="#e8eef8" stroke="#3a5a8a"/><rect x="1" y="4" width="11" height="2" fill="#3a5a8a"/><path d="M4 13 C2 13 2 10 4 10 H8 M9 10 H13 C15 10 15 13 13 13 H9" fill="none" stroke="#566" stroke-width="1.8"/></g><g transform="translate(311,4)"><defs><linearGradient id="cbg" x1="0" y1="0" x2="0" y2="1"><stop offset="0" stop-color="#9a8ee8"/><stop offset=".45" stop-color="#9ce8e8"/><stop offset=".8" stop-color="#f2e070"/><stop offset="1" stop-color="#f49a60"/></linearGradient></defs><rect x="0.5" y="0.5" width="10" height="15" fill="url(#cbg)" stroke="#3a4a8a"/></g><g transform="translate(331,4)"><rect x="0.5" y="0.5" width="15" height="15" fill="#fff" stroke="#2c3e7a"/><rect x="2" y="2.5" width="5" height="4" fill="#e85858"/><rect x="2" y="8.5" width="5" height="4" fill="#6464e8"/><path d="M8.5 4.5 H13 M8.5 10.5 H13" stroke="#000" stroke-width="1.3"/></g><g transform="translate(364,4)"><rect x="0.5" y="2.5" width="10" height="10" fill="#a6a6a6" stroke="#909090"/><path d="M1 2.5 L2 1.5 H10.5 L11.5 2.5 V12" fill="none" stroke="#b8b8b8"/></g><g transform="translate(385,4)"><rect x="0.5" y="0.5" width="15" height="14" fill="#3d5296" stroke="#2c3e7a"/><rect x="1" y="2" width="14" height="12" fill="#e8ecf4"/><rect x="4" y="3" width="8" height="9" fill="#fff" stroke="#3d5296"/><path d="M1 13 H15" stroke="#8a98c0" stroke-dasharray="1 1"/></g></svg></div>
<div class="a" style="left:-15px;top:123px;width:825px;height:432px;background:#f0f0f0;border-right:1px solid #8d8d8d;border-bottom:1px solid #8d8d8d"></div>
<!-- plots -->
<svg class="a" style="left:0;top:123px" width="809" height="431" viewBox="0 123 809 431"><rect x="92.5" y="200.5" width="638" height="95" fill="#fff" stroke="#262626"/><path d="M92.5 200.5 V206.5 M92.5 295.5 V289.5" stroke="#262626"/><text x="92.5" y="313.5" font-size="12" text-anchor="middle" fill="#262626" font-family="Liberation Sans">0</text><path d="M220.1 200.5 V206.5 M220.1 295.5 V289.5" stroke="#262626"/><text x="220.1" y="313.5" font-size="12" text-anchor="middle" fill="#262626" font-family="Liberation Sans">0.5</text><path d="M347.7 200.5 V206.5 M347.7 295.5 V289.5" stroke="#262626"/><text x="347.7" y="313.5" font-size="12" text-anchor="middle" fill="#262626" font-family="Liberation Sans">1</text><path d="M475.3 200.5 V206.5 M475.3 295.5 V289.5" stroke="#262626"/><text x="475.3" y="313.5" font-size="12" text-anchor="middle" fill="#262626" font-family="Liberation Sans">1.5</text><path d="M602.9 200.5 V206.5 M602.9 295.5 V289.5" stroke="#262626"/><text x="602.9" y="313.5" font-size="12" text-anchor="middle" fill="#262626" font-family="Liberation Sans">2</text><path d="M730.5 200.5 V206.5 M730.5 295.5 V289.5" stroke="#262626"/><text x="730.5" y="313.5" font-size="12" text-anchor="middle" fill="#262626" font-family="Liberation Sans">2.5</text><path d="M92.5 200.5 H98.5 M730.5 200.5 H724.5" stroke="#262626"/><text x="87" y="205.5" font-size="12" text-anchor="end" fill="#262626" font-family="Liberation Sans">5</text><path d="M92.5 232.167 H98.5 M730.5 232.167 H724.5" stroke="#262626"/><text x="87" y="237.167" font-size="12" text-anchor="end" fill="#262626" font-family="Liberation Sans">0</text><path d="M92.5 263.833 H98.5 M730.5 263.833 H724.5" stroke="#262626"/><text x="87" y="268.833" font-size="12" text-anchor="end" fill="#262626" font-family="Liberation Sans">-5</text><path d="M92.5 295.5 H98.5 M730.5 295.5 H724.5" stroke="#262626"/><text x="87" y="300.5" font-size="12" text-anchor="end" fill="#262626" font-family="Liberation Sans">-10</text><path d="M94 191 L100 197 M100 191 L94 197" stroke="#555" stroke-width="0.9"/><text x="103" y="197" font-size="12.5" fill="#262626" font-family="Liberation Sans">10</text><text x="117.5" y="190.5" font-size="10" fill="#262626" font-family="Liberation Sans">-7</text><path d="M698 331 L704 337 M704 331 L698 337" stroke="#555" stroke-width="0.9"/><text x="707" y="337" font-size="12.5" fill="#262626" font-family="Liberation Sans">10</text><text x="721.5" y="330.5" font-size="10" fill="#262626" font-family="Liberation Sans">-3</text><text x="411" y="193" font-size="15.3" font-weight="bold" text-anchor="middle" font-family="Liberation Sans">Line scan</text><polyline points="93.0,224.7 95.0,226.6 97.0,225.5 99.0,226.5 101.0,227.9 103.0,228.2 105.0,227.0 107.0,226.4 109.0,226.2 111.0,228.9 113.0,226.6 115.0,228.2 117.0,228.2 119.0,228.1 121.0,229.6 123.0,228.8 125.0,227.9 127.0,229.9 129.0,230.4 131.0,229.9 133.0,229.7 135.0,230.8 137.0,230.6 139.0,230.0 141.0,230.1 143.0,232.4 145.0,231.1 147.0,231.7 149.0,231.8 151.0,233.8 153.0,233.9 155.0,233.4 157.0,234.3 159.0,235.1 161.0,233.1 163.0,232.4 165.0,234.3 167.0,234.3 169.0,233.9 171.0,233.7 173.0,234.5 175.0,234.9 177.0,234.2 179.0,234.8 181.0,235.5 183.0,236.4 185.0,236.3 187.0,235.6 189.0,237.0 191.0,236.5 193.0,236.0 195.0,236.7 197.0,237.4 199.0,236.2 201.0,238.5 203.0,237.5 205.0,238.8 207.0,240.3 209.0,239.2 211.0,239.4 213.0,237.8 215.0,239.7 217.0,238.8 219.0,241.0 221.0,239.2 223.0,239.8 225.0,239.8 227.0,239.5 229.0,242.0 231.0,239.9 233.0,241.5 235.0,241.6 237.0,242.2 239.0,241.4 241.0,242.0 243.0,239.4 245.0,240.7 247.0,241.3 249.0,242.1 251.0,241.4 253.0,241.7 255.0,242.2 257.0,242.2 259.0,244.9 261.0,244.3 263.0,243.9 265.0,244.6 267.0,242.3 269.0,245.7 271.0,245.6 273.0,244.2 275.0,244.8 277.0,246.2 279.0,246.4 281.0,245.9 283.0,246.9 285.0,246.2 287.0,245.5 289.0,246.3 291.0,245.9 293.0,245.5 295.0,247.4 297.0,248.6 299.0,248.5 301.0,248.3 303.0,249.0 305.0,246.2 307.0,247.7 309.0,248.0 311.0,249.0 313.0,248.2 315.0,248.6 317.0,247.7 319.0,247.7 321.0,247.8 323.0,250.3 325.0,249.7 327.0,248.7 329.0,249.3 331.0,248.3 333.0,249.1 335.0,250.8 337.0,250.7 339.0,250.5 341.0,249.8 343.0,251.2 345.0,253.4 347.0,250.8 349.0,249.8 351.0,249.8 353.0,250.2 355.0,253.1 357.0,252.0 359.0,253.0 361.0,251.1 363.0,252.1 365.0,253.0 367.0,253.8 369.0,251.0 371.0,251.5 373.0,254.2 375.0,252.3 377.0,254.1 379.0,252.4 381.0,253.1 383.0,254.9 385.0,254.6 387.0,252.5 389.0,254.9 391.0,253.2 393.0,252.4 395.0,254.4 397.0,256.0 399.0,253.0 401.0,256.3 403.0,256.2 405.0,256.0 407.0,255.1 409.0,254.7 411.0,255.0 413.0,257.0 415.0,257.5 417.0,257.0 419.0,256.3 421.0,255.8 423.0,258.6 425.0,257.9 427.0,255.6 429.0,256.0 431.0,258.2 433.0,258.4 435.0,258.0 437.0,256.8 439.0,257.4 441.0,257.6 443.0,256.6 445.0,259.1 447.0,259.0 449.0,259.2 451.0,257.5 453.0,260.2 455.0,259.5 457.0,258.3 459.0,260.7 461.0,259.7 463.0,260.2 465.0,257.1 467.0,258.0 469.0,260.3 471.0,260.3 473.0,259.8 475.0,258.8 477.0,262.3 479.0,260.1 481.0,261.3 483.0,257.9 485.0,260.4 487.0,259.2 489.0,262.0 491.0,260.6 493.0,259.5 495.0,261.1 497.0,261.2 499.0,259.9 501.0,259.0 503.0,261.2 505.0,261.6 507.0,261.3 509.0,262.2 511.0,261.5 513.0,263.1 515.0,261.0 517.0,261.5 519.0,261.9 521.0,261.3 523.0,261.6 525.0,262.5 527.0,262.6 529.0,261.2 531.0,261.6 533.0,262.9 535.0,262.0 537.0,264.5 539.0,264.3 541.0,263.7 543.0,264.3 545.0,263.2 547.0,262.2 549.0,264.9 551.0,263.5 553.0,264.3 555.0,262.4 557.0,263.3 559.0,265.3 561.0,263.8 563.0,264.1 565.0,265.9 567.0,262.5 569.0,263.6 571.0,265.4 573.0,265.2 575.0,265.3 577.0,263.6 579.0,264.6 581.0,263.6 583.0,264.5 585.0,267.5 587.0,264.1 589.0,264.9 591.0,268.5 593.0,267.2 595.0,265.7 597.0,265.5 599.0,266.4 601.0,265.9 603.0,265.9 605.0,265.1 607.0,267.3 609.0,263.7 611.0,267.6 613.0,267.0 615.0,265.4 617.0,267.2 619.0,266.6 621.0,268.3" fill="none" stroke="#0072bd" stroke-width="1"/><rect x="92.5" y="403.5" width="638" height="95" fill="#fff" stroke="#262626"/><path d="M99.7 403.5 V409.5 M99.7 498.5 V492.5" stroke="#262626"/><text x="99.7" y="518" font-size="12" text-anchor="middle" fill="#262626" font-family="Liberation Sans">-2</text><path d="M202 403.5 V409.5 M202 498.5 V492.5" stroke="#262626"/><text x="202" y="518" font-size="12" text-anchor="middle" fill="#262626" font-family="Liberation Sans">-1</text><path d="M304.3 403.5 V409.5 M304.3 498.5 V492.5" stroke="#262626"/><text x="304.3" y="518" font-size="12" text-anchor="middle" fill="#262626" font-family="Liberation Sans">0</text><path d="M406.6 403.5 V409.5 M406.6 498.5 V492.5" stroke="#262626"/><text x="406.6" y="518" font-size="12" text-anchor="middle" fill="#262626" font-family="Liberation Sans">1</text><path d="M508.9 403.5 V409.5 M508.9 498.5 V492.5" stroke="#262626"/><text x="508.9" y="518" font-size="12" text-anchor="middle" fill="#262626" font-family="Liberation Sans">2</text><path d="M611.2 403.5 V409.5 M611.2 498.5 V492.5" stroke="#262626"/><text x="611.2" y="518" font-size="12" text-anchor="middle" fill="#262626" font-family="Liberation Sans">3</text><path d="M713.5 403.5 V409.5 M713.5 498.5 V492.5" stroke="#262626"/><text x="713.5" y="518" font-size="12" text-anchor="middle" fill="#262626" font-family="Liberation Sans">4</text><path d="M92.5 416.3 H98.5 M730.5 416.3 H724.5" stroke="#262626"/><text x="87" y="421.3" font-size="12" text-anchor="end" fill="#262626" font-family="Liberation Sans">5</text><path d="M92.5 439.8 H98.5 M730.5 439.8 H724.5" stroke="#262626"/><text x="87" y="444.8" font-size="12" text-anchor="end" fill="#262626" font-family="Liberation Sans">0</text><path d="M92.5 463.2 H98.5 M730.5 463.2 H724.5" stroke="#262626"/><text x="87" y="468.2" font-size="12" text-anchor="end" fill="#262626" font-family="Liberation Sans">-5</text><path d="M92.5 486.7 H98.5 M730.5 486.7 H724.5" stroke="#262626"/><text x="87" y="491.7" font-size="12" text-anchor="end" fill="#262626" font-family="Liberation Sans">-10</text><path d="M94 393.5 L100 399.5 M100 393.5 L94 399.5" stroke="#555" stroke-width="0.9"/><text x="103" y="399.5" font-size="12.5" fill="#262626" font-family="Liberation Sans">10</text><text x="117.5" y="393" font-size="10" fill="#262626" font-family="Liberation Sans">-7</text><path d="M698 535 L704 541 M704 535 L698 541" stroke="#555" stroke-width="0.9"/><text x="707" y="541" font-size="12.5" fill="#262626" font-family="Liberation Sans">10</text><text x="721.5" y="534.5" font-size="10" fill="#262626" font-family="Liberation Sans">-3</text><text x="411" y="356" font-size="15.3" font-weight="bold" text-anchor="middle" font-family="Liberation Sans">Fitting</text><text x="411" y="376" font-size="15.3" font-weight="bold" text-anchor="middle" font-family="Liberation Sans">Radius of curvature = 3.854m</text><text x="411" y="396" font-size="15.3" font-weight="bold" text-anchor="middle" font-family="Liberation Sans">Fitting Score = 0.24998</text><clipPath id="clp"><rect x="92.5" y="403.5" width="638" height="95"/></clipPath><polyline clip-path="url(#clp)" points="206.0,403.6 208.0,404.3 210.0,405.1 212.0,405.8 214.0,406.6 216.0,407.3 218.0,408.1 220.0,408.8 222.0,409.5 224.0,410.3 226.0,411.0 228.0,411.7 230.0,412.4 232.0,413.1 234.0,413.8 236.0,414.5 238.0,415.2 240.0,415.9 242.0,416.6 244.0,417.2 246.0,417.9 248.0,418.6 250.0,419.2 252.0,419.9 254.0,420.6 256.0,421.2 258.0,421.8 260.0,422.5 262.0,423.1 264.0,423.8 266.0,424.4 268.0,425.0 270.0,425.6 272.0,426.2 274.0,426.8 276.0,427.4 278.0,428.0 280.0,428.6 282.0,429.2 284.0,429.8 286.0,430.4 288.0,430.9 290.0,431.5 292.0,432.1 294.0,432.6 296.0,433.2 298.0,433.7 300.0,434.3 302.0,434.8 304.0,435.4 306.0,435.9 308.0,436.4 310.0,436.9 312.0,437.5 314.0,438.0 316.0,438.5 318.0,439.0 320.0,439.5 322.0,440.0 324.0,440.5 326.0,440.9 328.0,441.4 330.0,441.9 332.0,442.4 334.0,442.8 336.0,443.3 338.0,443.8 340.0,444.2 342.0,444.6 344.0,445.1 346.0,445.5 348.0,446.0 350.0,446.4 352.0,446.8 354.0,447.2 356.0,447.6 358.0,448.0 360.0,448.4 362.0,448.8 364.0,449.2 366.0,449.6 368.0,450.0 370.0,450.4 372.0,450.8 374.0,451.1 376.0,451.5 378.0,451.9 380.0,452.2 382.0,452.6 384.0,452.9 386.0,453.3 388.0,453.6 390.0,453.9 392.0,454.3 394.0,454.6 396.0,454.9 398.0,455.2 400.0,455.5 402.0,455.8 404.0,456.1 406.0,456.4 408.0,456.7 410.0,457.0 412.0,457.3 414.0,457.6 416.0,457.8 418.0,458.1 420.0,458.4 422.0,458.6 424.0,458.9 426.0,459.1 428.0,459.4 430.0,459.6 432.0,459.8 434.0,460.1 436.0,460.3 438.0,460.5 440.0,460.7 442.0,460.9 444.0,461.1 446.0,461.3 448.0,461.5 450.0,461.7 452.0,461.9 454.0,462.1 456.0,462.3 458.0,462.4 460.0,462.6 462.0,462.8 464.0,462.9 466.0,463.1 468.0,463.2 470.0,463.4 472.0,463.5 474.0,463.6 476.0,463.8 478.0,463.9 480.0,464.0 482.0,464.1 484.0,464.3 486.0,464.4 488.0,464.5 490.0,464.6 492.0,464.6 494.0,464.7 496.0,464.8 498.0,464.9 500.0,465.0 502.0,465.0 504.0,465.1 506.0,465.2 508.0,465.2 510.0,465.3 512.0,465.3 514.0,465.3 516.0,465.4 518.0,465.4 520.0,465.4 522.0,465.5 524.0,465.5 526.0,465.5 528.0,465.5 530.0,465.5 532.0,465.5 534.0,465.5 536.0,465.5 538.0,465.5 540.0,465.4 542.0,465.4 544.0,465.4 546.0,465.3 548.0,465.3 550.0,465.3 552.0,465.2 554.0,465.2 556.0,465.1 558.0,465.0 560.0,465.0 562.0,464.9 564.0,464.8 566.0,464.7 568.0,464.6 570.0,464.6 572.0,464.5 574.0,464.4 576.0,464.3 578.0,464.1 580.0,464.0 582.0,463.9 584.0,463.8 586.0,463.6 588.0,463.5 590.0,463.4 592.0,463.2 594.0,463.1 596.0,462.9 598.0,462.8 600.0,462.6 602.0,462.4 604.0,462.3 606.0,462.1 608.0,461.9 610.0,461.7 612.0,461.5 614.0,461.3 616.0,461.1 618.0,460.9 620.0,460.7 622.0,460.5 624.0,460.3 626.0,460.1 628.0,459.8 630.0,459.6 632.0,459.4 634.0,459.1 636.0,458.9 638.0,458.6 640.0,458.4 642.0,458.1 644.0,457.8 646.0,457.6 648.0,457.3 650.0,457.0 652.0,456.7 654.0,456.4 656.0,456.1 658.0,455.8 660.0,455.5 662.0,455.2 664.0,454.9 666.0,454.6 668.0,454.3 670.0,453.9 672.0,453.6 674.0,453.3 676.0,452.9 678.0,452.6 680.0,452.2 682.0,451.9 684.0,451.5 686.0,451.1 688.0,450.8 690.0,450.4 692.0,450.0 694.0,449.6 696.0,449.2 698.0,448.8 700.0,448.4 702.0,448.0 704.0,447.6 706.0,447.2 708.0,446.8 710.0,446.4 712.0,446.0 714.0,445.5 716.0,445.1 718.0,444.6 720.0,444.2 722.0,443.8 724.0,443.3 726.0,442.8 728.0,442.4 730.0,441.9" fill="none" stroke="#0072bd" stroke-width="1"/><path d="M301.0 430.5V444.1M302.0 433.3V440.7M303.0 433.5V442.9M304.0 431.1V443.1M305.0 433.5V443.1M306.0 432.9V444.3M307.0 434.4V443.8M308.0 432.8V443.7M309.0 433.8V444.1M310.0 434.7V445.0M311.0 434.6V445.4M312.0 436.2V443.8M313.0 435.4V446.1M314.0 436.3V444.5M315.0 435.6V444.0M316.0 437.0V447.9M317.0 437.0V447.3M318.0 437.7V447.1M319.0 434.7V445.5M320.0 436.8V446.7M321.0 436.3V449.1M322.0 438.2V447.1M323.0 438.8V447.2M324.0 437.7V448.6M325.0 438.9V449.5M326.0 438.7V449.9M327.0 439.5V447.6M328.0 439.4V448.5M329.0 440.2V450.9M330.0 439.2V450.1M331.0 438.7V450.2M332.0 440.5V452.8M333.0 440.8V448.4M334.0 439.9V449.0M335.0 441.5V450.2M336.0 441.7V449.3M337.0 439.0V451.0M338.0 441.6V449.8M339.0 442.6V452.0M340.0 441.4V450.2M341.0 442.6V450.4M342.0 442.4V451.2M343.0 441.2V451.0M344.0 441.9V450.7M345.0 441.5V453.1M346.0 443.3V451.8M347.0 443.9V453.2M348.0 442.7V453.6M349.0 443.1V452.1M350.0 441.9V452.1M351.0 443.1V454.0M352.0 444.8V453.0M353.0 444.5V453.3M354.0 445.7V453.2M355.0 441.7V453.6M356.0 446.0V454.9M357.0 443.1V454.4M358.0 446.4V455.1M359.0 446.6V455.0M360.0 444.9V455.3M361.0 446.8V455.4M362.0 444.3V454.7M363.0 446.6V455.6M364.0 447.1V455.7M365.0 446.6V456.6M366.0 446.9V457.0M367.0 447.5V455.9M368.0 447.8V455.5M369.0 446.7V455.7M370.0 445.8V456.2M371.0 447.9V458.4M372.0 447.9V457.7M373.0 446.7V457.2M374.0 447.9V458.4M375.0 447.9V456.8M376.0 449.8V457.2M377.0 447.5V457.6M378.0 448.6V459.3M379.0 447.5V458.0M380.0 447.6V458.7M381.0 448.6V459.0M382.0 450.4V458.8M383.0 450.9V460.0M384.0 450.9V458.7M385.0 449.9V458.8M386.0 450.9V460.6M387.0 451.1V459.8M388.0 451.1V461.3M389.0 451.2V462.1M390.0 450.8V459.3M391.0 450.6V460.4M392.0 450.1V461.0M393.0 451.7V459.7M394.0 451.6V461.1M395.0 451.6V461.5M396.0 452.7V461.1M397.0 452.6V460.6M398.0 451.3V460.6M399.0 452.2V462.0M400.0 452.9V462.0M401.0 453.4V463.8M402.0 452.5V463.0M403.0 451.8V461.4M404.0 452.5V463.1M405.0 451.7V462.1M406.0 452.9V463.8M407.0 454.3V462.8M408.0 453.5V465.1M409.0 452.2V463.4M410.0 454.7V462.8M411.0 454.6V463.8M412.0 454.1V463.7M413.0 455.1V463.7M414.0 455.4V464.3M415.0 454.6V464.4M416.0 455.7V464.8M417.0 455.4V464.8M418.0 453.2V464.3M419.0 455.9V463.4M420.0 455.2V465.1M421.0 453.8V465.6M422.0 456.5V467.3M423.0 456.2V465.5M424.0 456.0V465.1M425.0 455.6V464.8M426.0 455.9V464.4M427.0 456.7V466.9M428.0 454.1V465.6M429.0 456.7V464.7M430.0 457.3V465.5M431.0 457.0V465.2M432.0 455.7V465.2M433.0 456.3V467.5M434.0 456.5V466.8M435.0 455.2V466.3M436.0 458.0V466.0M437.0 457.0V468.0M438.0 457.1V468.5M439.0 455.1V465.9M440.0 457.5V466.0M441.0 458.3V467.1M442.0 457.2V466.8M443.0 456.7V467.7M444.0 457.8V466.3M445.0 457.6V468.4M446.0 458.2V467.4M447.0 457.6V466.8M448.0 458.9V468.3M449.0 459.5V467.1M450.0 458.0V468.3M451.0 458.9V468.6M452.0 459.2V467.0M453.0 457.5V472.2M454.0 459.6V467.8M455.0 458.5V469.3M456.0 459.0V469.2M457.0 457.7V469.6M458.0 459.5V468.6M459.0 457.8V467.8M460.0 460.3V468.4M461.0 457.8V468.3M462.0 459.1V468.2M463.0 460.5V469.3M464.0 459.8V468.1M465.0 460.9V468.8M466.0 459.6V469.9M467.0 460.4V469.5M468.0 459.0V470.6M469.0 460.8V468.5M470.0 460.6V468.2M471.0 460.4V469.8M472.0 460.7V468.6M473.0 459.8V470.4M474.0 460.8V469.0M475.0 460.4V469.0M476.0 460.5V471.3M477.0 461.1V468.9M478.0 460.2V469.7M479.0 460.8V471.4M480.0 459.5V470.3M481.0 461.6V469.9M482.0 459.3V468.9M483.0 460.8V471.5M484.0 461.7V470.6M485.0 460.5V469.7M486.0 458.4V470.0M487.0 460.9V470.7M488.0 460.4V470.6M489.0 460.2V470.5M490.0 461.3V471.1M491.0 461.1V470.0M492.0 462.3V471.1M493.0 459.5V470.1M494.0 461.8V470.3M495.0 461.1V475.4M496.0 462.3V470.8M497.0 462.3V472.1M498.0 459.3V472.3M499.0 461.5V473.2M500.0 460.9V469.9M501.0 462.3V469.7M502.0 461.4V469.7M503.0 462.6V473.1M504.0 462.0V471.4M505.0 462.1V472.8M506.0 460.6V472.5M507.0 461.8V470.9M508.0 461.5V470.9M509.0 461.9V471.2M510.0 460.5V470.0M511.0 461.3V470.1M512.0 461.5V470.2M513.0 462.7V470.2M514.0 462.9V471.6M515.0 462.2V470.9M516.0 462.7V470.1M517.0 462.2V470.3M518.0 462.3V472.3M519.0 462.4V472.1M520.0 460.8V472.5M521.0 462.5V470.3" stroke="#ff0000" stroke-width="1.4"/></svg>
<!-- Slider window -->
<div class="a" style="left:21px;top:662px;width:672px;height:317px;border:1px solid #3a3a3a;border-radius:7px 7px 6px 6px;background:linear-gradient(#f6f7f9,#fdfdfd 20px,#f2f4f6 29px,#f4f5f7);box-shadow:0 0 10px 2px rgba(0,0,0,.35)"></div>
<div class="a" style="left:29px;top:669px;width:16px;height:16px;border:1px solid #a6acb4;background:linear-gradient(#f4f6f8,#dde2e8)"></div>
<div class="a" style="left:30px;top:670px;width:15px;height:2px;background:#8fb0d8"></div><svg class="a" style="left:29px;top:671px" width="16" height="14" viewBox="0 0 16 14"><path d="M1 10 L6 7.5 L7.5 10.5 Z" fill="#3a78c0"/><path d="M6 7.5 L9 2 L11 6.5 L10.5 12.5 L7.5 10.5Z" fill="#f08a24"/><path d="M9 2 L12 7 L14.5 11.5 L10.5 12.5 L11 6.5Z" fill="#c8401c"/></svg>
<div class="t" style="left:50px;top:671px;font-size:12px">Slider</div>
<div class="wbtns" style="left:583px;top:662px;width:104px;height:20px">
 <div style="width:28px"><div class="a" style="left:8px;top:10px;width:12px;height:4px;border:1px solid #3c4150;background:#fff"></div></div>
 <div style="width:27px"><div class="a" style="left:8px;top:4px;width:11px;height:10px;border:1px solid #a9adb5;background:#fff"><div class="a" style="left:2px;top:2px;width:5px;height:4px;border:1px solid #a9adb5"></div></div></div>
 <div style="width:49px"><svg class="a" style="left:18px;top:4px" width="13" height="11"><path d="M1.5 1 L11.5 10 M11.5 1 L1.5 10" stroke="#3c4150" stroke-width="5"/><path d="M1.5 1 L11.5 10 M11.5 1 L1.5 10" stroke="#fff" stroke-width="2.6"/></svg></div>
</div>
<div class="a" style="left:28px;top:691px;width:658px;height:281px;background:#f0f0f0;border:1px solid #8d8d8d"></div>
<div class="t" style="left:75px;top:719px;font-size:16px">Y</div>
<div class="t" style="left:234px;top:710px;font-size:19.3px">move line</div>
<div class="t" style="left:342px;top:710px;font-size:17.2px">X: 629</div>
<div class="t" style="left:583px;top:715px;font-size:15.4px">In Y verkürzen</div>
<div class="t" style="left:144px;top:822px;font-size:16px">X1:</div>
<div class="t" style="left:293px;top:822px;font-size:16px">X2:</div>
<div class="t" style="left:442px;top:897px;font-size:15.9px">Mittelwert:</div>
<!-- vertical slider left -->
<div class="a" style="left:55px;top:742px;width:51px;height:150px;background:#e4e4e4;border-right:2px solid #8d8d8d;border-bottom:2px solid #8d8d8d;border-top:2px solid #f8f8f8;border-left:1px solid #f8f8f8"></div>
<div class="a" style="left:56px;top:743px;width:48px;height:14px;background:#efefef;border-bottom:2px solid #8d8d8d"></div>
<svg class="a" style="left:75px;top:747px" width="8" height="4"><path d="M0 4 L4 0 L8 4Z" fill="#555"/></svg>
<div class="a" style="left:56px;top:757px;width:1px;height:56px;background:#8d8d8d"></div>
<div class="a" style="left:56px;top:813px;width:48px;height:9px;background:#f4f4f4;border-bottom:2px solid #8d8d8d"></div>
<div class="a" style="left:56px;top:822px;width:1px;height:55px;background:#8d8d8d"></div>
<div class="a" style="left:56px;top:877px;width:48px;height:13px;background:#efefef;border-top:2px solid #fafafa"></div>
<svg class="a" style="left:75px;top:882px" width="8" height="4"><path d="M0 0 L4 4 L8 0Z" fill="#555"/></svg>
<!-- vertical slider right -->
<div class="a" style="left:609px;top:741px;width:51px;height:150px;background:#e4e4e4;border-right:2px solid #8d8d8d;border-bottom:2px solid #8d8d8d;border-top:1px solid #f8f8f8;border-left:1px solid #f8f8f8"></div>
<div class="a" style="left:610px;top:742px;width:48px;height:14px;background:#efefef;border-bottom:2px solid #8d8d8d"></div>
<svg class="a" style="left:629px;top:746px" width="8" height="4"><path d="M0 4 L4 0 L8 4Z" fill="#555"/></svg>
<div class="a" style="left:610px;top:756px;width:1px;height:57px;background:#8d8d8d"></div>
<div class="a" style="left:610px;top:813px;width:48px;height:8px;background:#f4f4f4;border-bottom:2px solid #8d8d8d"></div>
<div class="a" style="left:610px;top:821px;width:1px;height:56px;background:#8d8d8d"></div>
<div class="a" style="left:610px;top:877px;width:48px;height:12px;background:#efefef;border-top:1px solid #fafafa"></div>
<svg class="a" style="left:629px;top:881px" width="8" height="4"><path d="M0 0 L4 4 L8 0Z" fill="#555"/></svg>
<!-- horizontal slider -->
<div class="a" style="left:129px;top:743px;width:291px;height:48px;background:#e4e4e4;border-right:2px solid #8d8d8d;border-bottom:2px solid #8d8d8d;border-top:1px solid #f8f8f8;border-left:2px solid #f8f8f8"></div>
<div class="a" style="left:130px;top:744px;width:14px;height:45px;background:#efefef;border-right:2px solid #8d8d8d"></div>
<svg class="a" style="left:134px;top:762px" width="4" height="8"><path d="M4 0 L0 4 L4 8Z" fill="#555"/></svg>
<div class="a" style="left:144px;top:744px;width:127px;height:1px;background:#8d8d8d"></div>
<div class="a" style="left:271px;top:744px;width:21px;height:45px;background:#f4f4f4;border-right:2px solid #8d8d8d"></div>
<div class="a" style="left:292px;top:744px;width:113px;height:1px;background:#8d8d8d"></div>
<div class="a" style="left:405px;top:744px;width:13px;height:45px;background:#efefef;border-left:2px solid #fafafa"></div>
<svg class="a" style="left:409px;top:762px" width="4" height="8"><path d="M0 0 L4 4 L0 8Z" fill="#555"/></svg>
<!-- buttons -->
<div class="btn" style="left:443px;top:742px;width:148px;height:48px"><span class="t" style="left:16px;top:15px;font-size:15.8px">Werte speichern</span></div>
<div class="btn" style="left:143px;top:842px;width:99px;height:49px"><span class="t" style="left:7px;top:19px;font-size:11px">Interval Grenze 1</span></div>
<div class="btn" style="left:293px;top:842px;width:99px;height:49px"><span class="t" style="left:7px;top:19px;font-size:11px">Interval Grenze 2</span></div>
<div class="btn" style="left:443px;top:842px;width:122px;height:49px"><span class="t" style="left:9px;top:19px;font-size:11.3px">Mittelwert berechnen</span></div>
<div class="btn" style="left:57px;top:919px;width:149px;height:49px"><span class="t" style="left:38px;top:19px;font-size:11.1px">Auto Linescan</span></div>
</body></html>
